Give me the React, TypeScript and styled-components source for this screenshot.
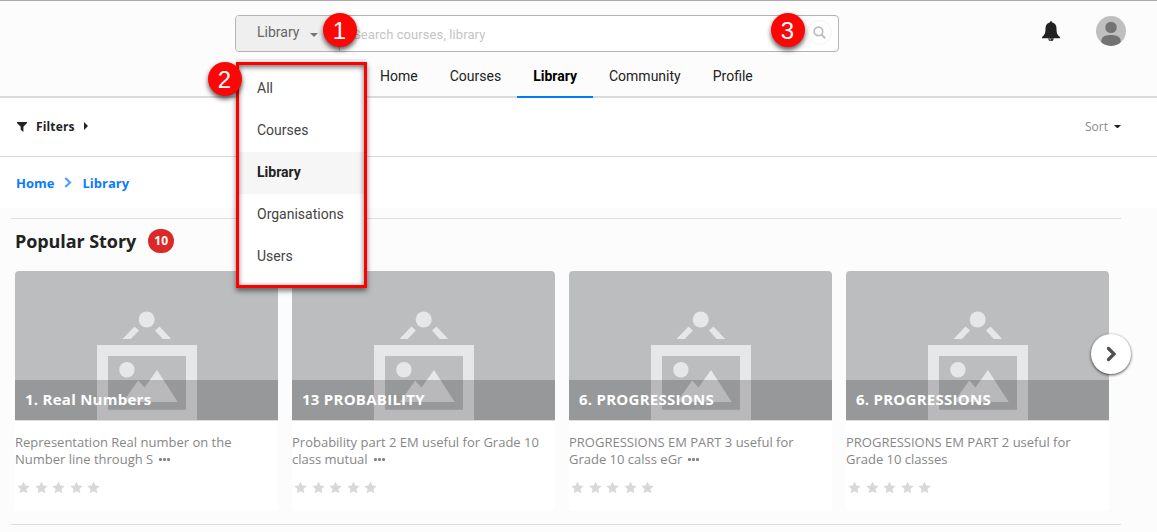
import React from "react";
import styled, { createGlobalStyle, css } from "styled-components";

const GlobalStyle = createGlobalStyle`
  *, *::before, *::after { box-sizing: border-box; }
  body {
    margin: 0;
    background: #fcfcfc;
    color: #222;
    font-family: "Open Sans", sans-serif;
    overflow: hidden;
  }
`;

const Page = styled.div`
  height: 532px;
  overflow: hidden;
`;

const Header = styled.header`
  display: grid;
  grid-template-columns: 235px 604px 1fr;
  height: 98px;
  border-top: 1px solid #aaa;
  border-bottom: 2px solid #dbdbdb;
  font-family: Roboto, sans-serif;
`;

const HeaderCenter = styled.div`
  grid-column: 2;
  display: flex;
  flex-direction: column;
  justify-content: space-between;
  padding-top: 14px;
`;

const SearchBar = styled.div`
  position: relative;
  display: flex;
  height: 37px;
  border: 1px solid #b3b3b3;
  border-radius: 4px;
  background: #fff;
`;

const ScopeButton = styled.div`
  display: flex;
  align-items: center;
  justify-content: space-between;
  width: 104px;
  padding: 0 21px 3px 21px;
  border-right: 1px solid #b3b3b3;
  border-radius: 3px 0 0 3px;
  background: #efefef;
  color: #666;
  font-size: 14px;

  svg { margin-top: 5px; }
`;

const SearchText = styled.div`
  flex: 1;
  padding: 10px 0 0 13px;
  color: #c4c4c4;
  font-size: 13px;
  line-height: 17px;
  letter-spacing: 0.08px;
`;

const SearchButton = styled.div`
  display: flex;
  align-items: center;
  justify-content: center;
  width: 25px;
  height: 25px;
  margin: 4px 6px 0 0;
  border: 1px solid #f3f3f3;
  border-radius: 50%;
`;

const Nav = styled.nav`
  display: flex;
  height: 43px;
  margin: 0 0 -2px 129px;
`;

const NavItem = styled.a<{ $active?: boolean }>`
  padding: 12px 16px 0;
  border-bottom: 2px solid transparent;
  color: #222;
  font-size: 14px;
  line-height: 18px;
  ${(p) =>
    p.$active &&
    css`
      border-color: #007aff;
      color: #000;
      font-weight: 700;
    `}
`;

const HeaderActions = styled.div`
  display: flex;
  justify-content: flex-end;
  align-items: flex-start;
  gap: 36px;
  padding: 15px 31px 0 0;

  svg:first-child { margin-top: 5px; }
`;

const ScopeMenu = styled.div`
  position: absolute;
  left: 0;
  top: 46px;
  z-index: 2;
  width: 131px;
  height: 226px;
  padding: 3px 0 0;
  border: 3px solid #fe0000;
  background: #fff;
  box-shadow: 0 3px 5px rgba(0, 0, 0, 0.5), inset 0 4px 5px -1px rgba(0, 0, 0, 0.4),
    inset -2px 0 4px rgba(0, 0, 0, 0.18), inset 2px 0 4px rgba(0, 0, 0, 0.12), 0 -3px 0 #eee;
`;

const ScopeOption = styled.div<{ $active?: boolean }>`
  height: 42px;
  padding-left: 18px;
  color: #444;
  font-size: 14px;
  line-height: 41px;
  ${(p) =>
    p.$active &&
    css`
      background: rgba(0, 0, 0, 0.035);
      color: #222;
      font-weight: 700;
    `}
`;

const Marker = styled.div<{ $x: number; $y: number }>`
  position: absolute;
  left: ${(p) => p.$x}px;
  top: ${(p) => p.$y}px;
  z-index: 3;
  width: 34px;
  height: 34px;
  border-radius: 50%;
  background: #fe0606;
  box-shadow: 0 3px 5px rgba(0, 0, 0, 0.65);
  color: #fff;
  font: 24px/35px "Liberation Sans", sans-serif;
  text-align: center;
`;

const FilterBar = styled.div`
  display: flex;
  align-items: center;
  justify-content: space-between;
  height: 59px;
  padding: 0 36px 1px 17px;
  border-bottom: 1px solid #dadada;
  background: #fff;
  font-size: 12px;
`;

const FilterLabel = styled.div`
  display: flex;
  align-items: center;
  gap: 9px;
  font-weight: 700;
  letter-spacing: 0.15px;

  svg:last-child { margin: -2px 0 0 0; }
`;

const SortLabel = styled.div`
  display: flex;
  align-items: center;
  gap: 6px;
  color: #8b8b8b;
`;

const Breadcrumb = styled.div`
  display: flex;
  align-items: center;
  gap: 10px;
  height: 51px;
  padding: 1px 0 1px 16px;
  background: #fff;
  color: #0b7aff;
  font-size: 13px;
  font-weight: 700;
`;

const Shelf = styled.section`
  position: relative;
  width: 1110px;
  height: 307px;
  margin: 10px 0 0 11px;
  padding-left: 4px;
  border-top: 1px solid #dedede;
  border-bottom: 1px solid #dedede;
`;

const ShelfHeader = styled.div`
  display: flex;
  align-items: center;
  gap: 12px;
  height: 52px;
  padding-bottom: 8px;
`;

const ShelfTitle = styled.h2`
  margin: 0;
  font-size: 18px;
  line-height: 24px;
  font-weight: 700;
  letter-spacing: -0.08px;
`;

const Count = styled.span`
  width: 26px;
  height: 24px;
  border-radius: 12px;
  background: #db2828;
  color: #fff;
  font-size: 12px;
  font-weight: 700;
  line-height: 23px;
  text-align: center;
`;

const CardRow = styled.div`
  display: flex;
  gap: 14px;
`;

const Card = styled.article`
  width: 263px;
  height: 240px;
  border-radius: 4px;
  background: #fff;
  overflow: hidden;
`;

const Cover = styled.div`
  position: relative;
  height: 150px;
  border-bottom: 1px solid #dededf;
  background: #bcbdbf;

  svg { display: block; }
`;

const CoverTitle = styled.div`
  position: absolute;
  inset: 109px 0 0;
  padding-left: 10px;
  background: rgba(0, 0, 0, 0.195);
  color: #fff;
  font-size: 15px;
  font-weight: 700;
  line-height: 39px;
  letter-spacing: 0.26px;
`;

const Description = styled.p`
  height: 34px;
  margin: 13px 0 0;
  color: #878787;
  font-size: 13px;
  line-height: 17px;
  white-space: pre-line;

  svg { margin-left: 6px; vertical-align: 3px; }
`;

const Stars = styled.div`
  display: flex;
  gap: 4.5px;
  padding: 13px 0 0 2px;
`;

const NextButton = styled.button`
  position: absolute;
  left: 1080px;
  top: 115px;
  display: flex;
  align-items: center;
  justify-content: center;
  width: 40px;
  height: 40px;
  padding: 0;
  border: 0;
  border-radius: 50%;
  background: #fff;
  box-shadow: 0 1px 3px rgba(0, 0, 0, 0.75);
`;

const scopes = ["All", "Courses", "Library", "Organisations", "Users"];
const pages = ["Home", "Courses", "Library", "Community", "Profile"];
const stories = [
  { title: "1. Real Numbers", text: "Representation Real number on the\nNumber line through S", more: true },
  { title: "13 PROBABILITY", text: "Probability part 2 EM useful for Grade 10\nclass mutual", more: true },
  { title: "6. PROGRESSIONS", text: "PROGRESSIONS EM PART 3 useful for\nGrade 10 calss eGr", more: true },
  { title: "6. PROGRESSIONS", text: "PROGRESSIONS EM PART 2 useful for\nGrade 10 classes", more: false },
];

const CaretDown = ({ color = "#222", size = 8 }) => (
  <svg width={size} height={size / 2} viewBox="0 0 8 4">
    <path d="M0 0H8L4 4Z" fill={color} />
  </svg>
);

const Bell = () => (
  <svg width="18" height="21" viewBox="0 0 18 21">
    <path
      d="M9 .2C8.200.2 7.900.7 7.800 1.500C4.900 2.100 3.500 4.300 3.500 7.500C3.500 12 2.700 14 0 15.900V17.200H18V15.900C15.300 14 14.500 12 14.500 7.500C14.500 4.300 13.100 2.100 10.200 1.500C10.100.7 9.800.2 9 .2Z"
      fill="#222"
    />
    <path d="M6.300 17.200A2.700 2.900 0 0 0 11.700 17.200Z" fill="#333" />
    <path d="M7.600 17.700Q7.800 18.900 9 19.100" stroke="#ddd" strokeWidth=".8" fill="none" />
  </svg>
);

const Avatar = () => (
  <svg width="30" height="30" viewBox="0 0 30 30">
    <clipPath id="avatarClip">
      <circle cx="15" cy="15" r="15" />
    </clipPath>
    <g clipPath="url(#avatarClip)">
      <rect width="30" height="30" fill="#bfbfbf" />
      <circle cx="15" cy="11.400" r="5.700" fill="#737373" />
      <path d="M5.300 25C5.300 21 9 19 15 19S24.700 21 24.700 25V30H5.300Z" fill="#737373" />
    </g>
  </svg>
);

const Placeholder = () => (
  <svg width="263" height="149" viewBox="0 0 263 149" fill="#e6e7e9">
    <circle cx="131.700" cy="48.500" r="8" />
    <path d="M119.500 55.500L124 59.500L115.700 68H107.500Z" />
    <path d="M144.500 55.500L140 59.500L147.700 68H156.200Z" />
    <path d="M82 74H182V160H82ZM93 85V138.700H171V85Z" fillRule="evenodd" />
    <circle cx="111.900" cy="98.800" r="7.700" />
    <path d="M108 131L123.200 109.500L129.500 116.500L142 99L162.700 131Z" />
  </svg>
);

const Star = () => (
  <svg width="13" height="13" viewBox="0 0 13 13">
    <path
      d="M6.500.4L8.400 4.400L12.700 4.900L9.500 7.900L10.300 12.300L6.500 10.200L2.700 12.300L3.500 7.900L.3 4.900L4.600 4.400Z"
      fill="#d8d8d8"
    />
  </svg>
);

const Ellipsis = () => (
  <svg width="11" height="3" viewBox="0 0 11 3" fill="#858585">
    <rect width="3" height="3" rx="1" />
    <rect x="4" width="3" height="3" rx="1" />
    <rect x="8" width="3" height="3" rx="1" />
  </svg>
);

export default function App() {
  return (
    <Page>
      <GlobalStyle />
      <Header>
        <HeaderCenter>
          <SearchBar>
            <ScopeButton>
              Library
              <CaretDown color="#777" />
            </ScopeButton>
            <SearchText>Search courses, library</SearchText>
            <SearchButton>
              <svg width="13" height="13" viewBox="0 0 13 13" fill="none" stroke="#bcbcbc">
                <circle cx="5.400" cy="5.400" r="4.300" strokeWidth="1.700" />
                <path d="M8.600 8.600L12.200 12.200" strokeWidth="2" />
              </svg>
            </SearchButton>
            <ScopeMenu>
              {scopes.map((s) => (
                <ScopeOption key={s} $active={s === "Library"}>
                  {s}
                </ScopeOption>
              ))}
            </ScopeMenu>
          </SearchBar>
          <Nav>
            {pages.map((p) => (
              <NavItem key={p} $active={p === "Library"}>
                {p}
              </NavItem>
            ))}
          </Nav>
        </HeaderCenter>
        <HeaderActions>
          <Bell />
          <Avatar />
        </HeaderActions>
      </Header>

      <FilterBar>
        <FilterLabel>
          <svg width="10" height="10" viewBox="0 0 10 10">
            <path d="M0 0H10V1L6.400 4.800V10L3.700 7.800V4.800L0 1Z" fill="#222" />
          </svg>
          Filters
          <svg width="4" height="8" viewBox="0 0 4 8">
            <path d="M0 0L4 4L0 8Z" fill="#222" />
          </svg>
        </FilterLabel>
        <SortLabel>
          Sort
          <CaretDown size={7} />
        </SortLabel>
      </FilterBar>

      <Breadcrumb>
        Home
        <svg width="8" height="11" viewBox="0 0 8 11">
          <path d="M1.300 1L6 5.500L1.300 10" fill="none" stroke="#4a9fff" strokeWidth="2.200" />
        </svg>
        Library
      </Breadcrumb>

      <Shelf>
        <ShelfHeader>
          <ShelfTitle>Popular Story</ShelfTitle>
          <Count>10</Count>
        </ShelfHeader>
        <CardRow>
          {stories.map((s, i) => (
            <Card key={i}>
              <Cover>
                <Placeholder />
                <CoverTitle>{s.title}</CoverTitle>
              </Cover>
              <Description>
                {s.text}
                {s.more && <Ellipsis />}
              </Description>
              <Stars>
                {[0, 1, 2, 3, 4].map((n) => (
                  <Star key={n} />
                ))}
              </Stars>
            </Card>
          ))}
        </CardRow>
        <NextButton aria-label="Next">
          <svg width="12" height="16" viewBox="0 0 12 16">
            <path
              d="M3.500 2.500L9 8L3.500 13.500"
              fill="none"
              stroke="#505050"
              strokeWidth="3.300"
              strokeLinecap="round"
            />
          </svg>
        </NextButton>
      </Shelf>

      <Marker $x={322.5} $y={13}>1</Marker>
      <Marker $x={207.5} $y={62}>2</Marker>
      <Marker $x={770.5} $y={13}>3</Marker>
    </Page>
  );
}
